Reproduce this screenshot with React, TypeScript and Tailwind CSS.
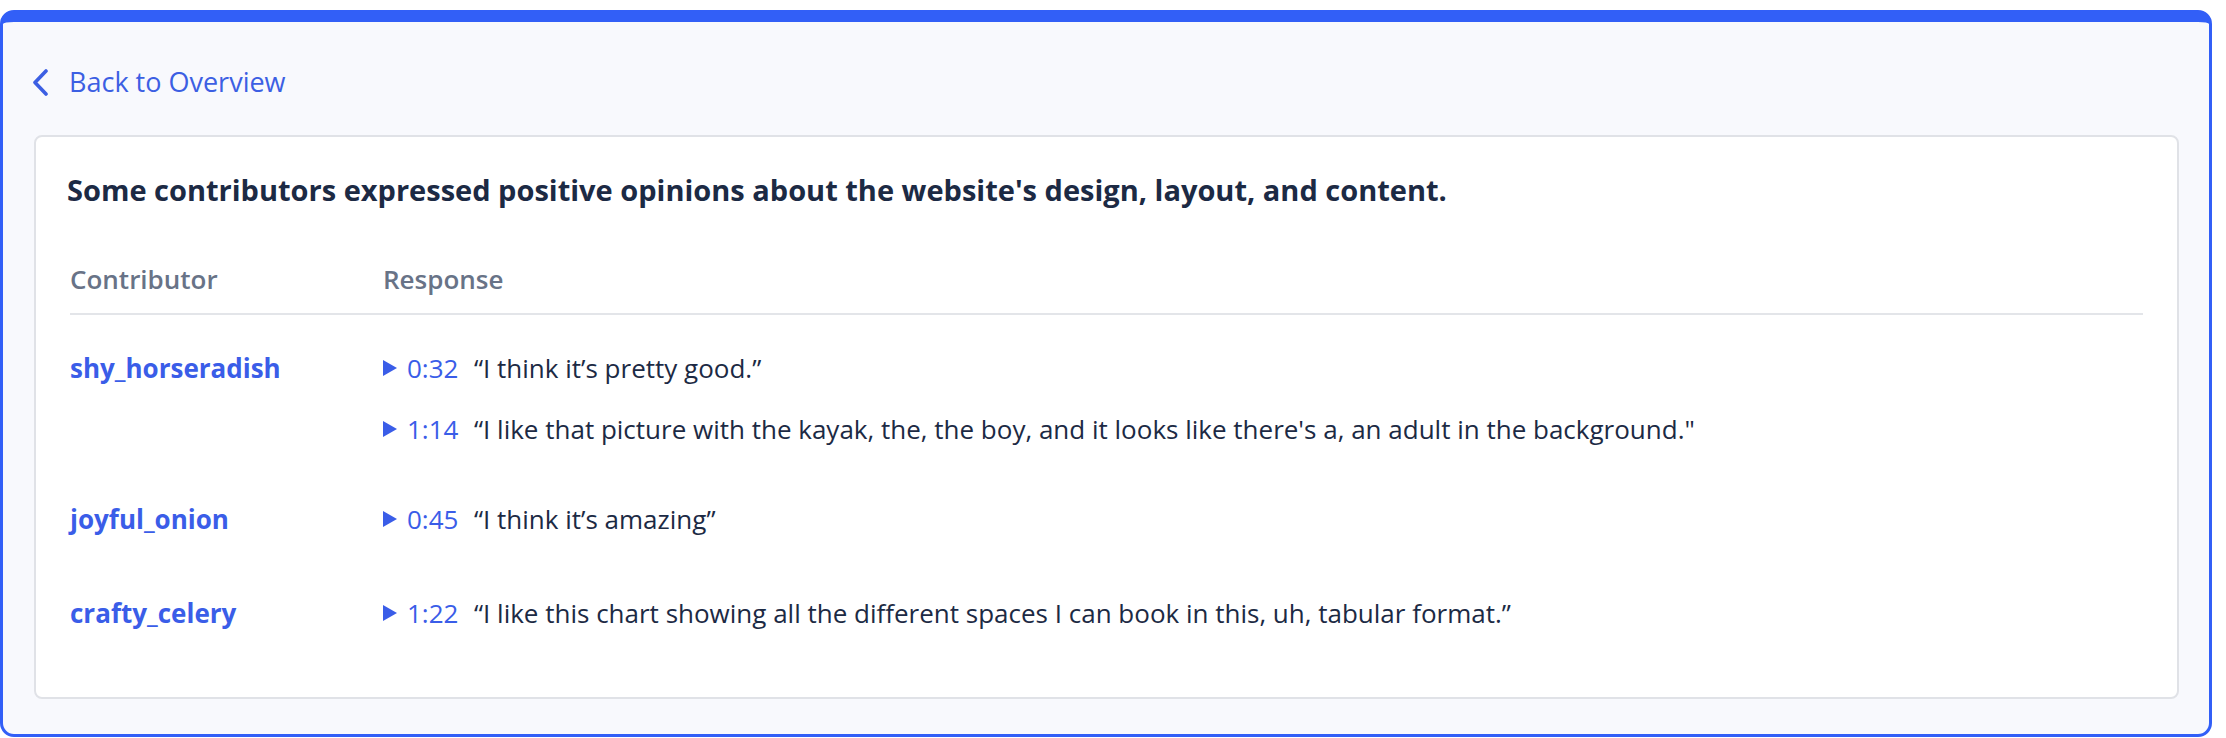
import React from 'react'

type Clip = { time: string; quote: string }
type Row = { contributor: string; clips: Clip[] }

const rows: Row[] = [
  {
    contributor: 'shy_horseradish',
    clips: [
      { time: '0:32', quote: '\u201CI think it\u2019s pretty good.\u201D' },
      {
        time: '1:14',
        quote:
          '\u201CI like that picture with the kayak, the, the boy, and it looks like there\'s a, an adult in the background."',
      },
    ],
  },
  {
    contributor: 'joyful_onion',
    clips: [{ time: '0:45', quote: '\u201CI think it\u2019s amazing\u201D' }],
  },
  {
    contributor: 'crafty_celery',
    clips: [
      {
        time: '1:22',
        quote:
          '\u201CI like this chart showing all the different spaces I can book in this, uh, tabular format.\u201D',
      },
    ],
  },
]

function PlayIcon() {
  return (
    <svg width="14" height="16" viewBox="0 0 14 16" className="shrink-0">
      <polygon points="0,0 14,8 0,16" fill="#3a5de8" />
    </svg>
  )
}

export default function App() {
  return (
    <div
      className="min-h-screen bg-white pt-[10px]"
      style={{ fontFamily: '"Open Sans", "Liberation Sans", Arial, sans-serif' }}
    >
      <div className="w-[2212px] h-[727px] rounded-[14px] border-x-[3px] border-t-[12px] border-b-[3px] border-[#325ff7] bg-[#f8f9fd] px-[30px] pt-[42px]">
        {/* ── Back link ── */}
        <a className="flex items-center gap-[21px] h-[36px] text-[27px] text-[#3c5fe3] cursor-pointer">
          <svg width="15" height="27" viewBox="0 0 15 27" className="shrink-0">
            <polyline
              points="13,2 2,13.5 13,25"
              fill="none"
              stroke="#3c5fe3"
              strokeWidth="3.6"
              strokeLinecap="round"
              strokeLinejoin="round"
            />
          </svg>
          <span>Back to Overview</span>
        </a>

        {/* ── Card ── */}
        <div className="mt-[35px] ml-[1px] rounded-[8px] border-2 border-[#e0e2e7] bg-white px-[31px] pt-[35px] pb-[39px]">
          <h2 className="text-[29px] leading-[36px] font-bold text-[#1c2a44]">
            Some contributors expressed positive opinions about the website's design, layout, and content.
          </h2>

          <div className="mt-[53px] mx-[3px]">
            <div className="grid grid-cols-[313px_1fr] pb-[16px] border-b-2 border-[#e3e5e9] text-[26px] leading-[36px] font-semibold text-[#687387]">
              <span>Contributor</span>
              <span>Response</span>
            </div>

            <div className="pt-[8px]">
              {rows.map((r, i) => (
                <div
                  key={r.contributor}
                  className={`grid grid-cols-[313px_1fr] text-[26px] leading-[36px] ${i === 2 ? 'pt-[31px] pb-[27px]' : 'py-[27px]'}`}
                >
                  <span className="font-bold text-[#3a5de8]">{r.contributor}</span>
                  <div className="flex flex-col gap-[25px]">
                    {r.clips.map(c => (
                      <div key={c.time} className="flex items-center">
                        <PlayIcon />
                        <span className="ml-[10px] w-[67px] shrink-0 text-[#3a5de8]">{c.time}</span>
                        <span className="text-[#1c2a44]">{c.quote}</span>
                      </div>
                    ))}
                  </div>
                </div>
              ))}
            </div>
          </div>
        </div>
      </div>
    </div>
  )
}
